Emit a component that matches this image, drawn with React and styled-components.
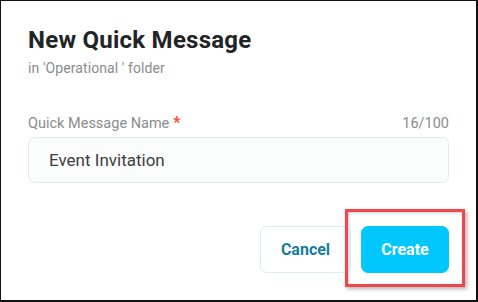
import React from "react";
import styled, { createGlobalStyle } from "styled-components";

const GlobalStyle = createGlobalStyle`
  html, body {
    margin: 0;
    padding: 0;
    background: #ffffff;
  }
  * {
    box-sizing: border-box;
  }
`;

const Frame = styled.div`
  position: relative;
  width: 478px;
  height: 302px;
  background: #ffffff;
  border-style: solid;
  border-color: #111111;
  border-width: 1px 2px 2px 1px;
  padding: 25px 27px 0 27px;
  font-family: Roboto, "Liberation Sans", sans-serif;
  display: flex;
  flex-direction: column;
`;

const Title = styled.h1`
  margin: 0;
  font-size: 24px;
  line-height: 28px;
  font-weight: 700;
  letter-spacing: 0.25px;
  color: #222426;
`;

const Subtitle = styled.div`
  margin-top: 6px;
  font-size: 14px;
  line-height: 16px;
  letter-spacing: 0.1px;
  color: #8a8c8e;
`;

const Field = styled.div`
  margin-top: 38px;
  display: flex;
  flex-direction: column;
  gap: 4px;
`;

const LabelRow = styled.div`
  display: flex;
  justify-content: space-between;
  align-items: baseline;
  font-size: 14.5px;
  line-height: 18px;
  color: #8a8c8e;
`;

const Required = styled.span`
  color: #f4511e;
  font-weight: 700;
  font-size: 16px;
  margin-left: 4px;
`;

const Input = styled.div`
  height: 46px;
  display: flex;
  align-items: center;
  padding: 0 20px;
  border: 1px solid #dcecef;
  border-radius: 7px;
  background: #fbfcfc;
  font-size: 17px;
  color: #3c3e40;
`;

const Actions = styled.div`
  margin-top: 43px;
  display: flex;
  justify-content: flex-end;
  gap: 10px;
`;

const Button = styled.button`
  height: 47px;
  width: ${(p) => (p.primary ? "88px" : "91px")};
  border-radius: 7px;
  border: 1px solid ${(p) => (p.primary ? "#00c8ff" : "#dcecef")};
  background: ${(p) => (p.primary ? "#00c8ff" : "#ffffff")};
  color: ${(p) => (p.primary ? "#ffffff" : "#147d98")};
  font-family: Roboto, "Liberation Sans", sans-serif;
  font-size: 16px;
  font-weight: 700;
  padding: 0;
`;

const Highlight = styled.div`
  position: absolute;
  left: 344px;
  top: 208px;
  width: 120px;
  height: 78px;
  border: 3px solid #f0474c;
  box-shadow: 2px 2px 4px rgba(0, 0, 0, 0.3), inset 1px 1px 3px rgba(0, 0, 0, 0.2);
  pointer-events: none;
`;

export default function App() {
  return (
    <>
      <GlobalStyle />
      <Frame>
        <Title>New Quick Message</Title>
        <Subtitle>in 'Operational ' folder</Subtitle>
        <Field>
          <LabelRow>
            <span>
              Quick Message Name<Required>*</Required>
            </span>
            <span>16/100</span>
          </LabelRow>
          <Input>Event Invitation</Input>
        </Field>
        <Actions>
          <Button>Cancel</Button>
          <Button primary>Create</Button>
        </Actions>
        <Highlight />
      </Frame>
    </>
  );
}
